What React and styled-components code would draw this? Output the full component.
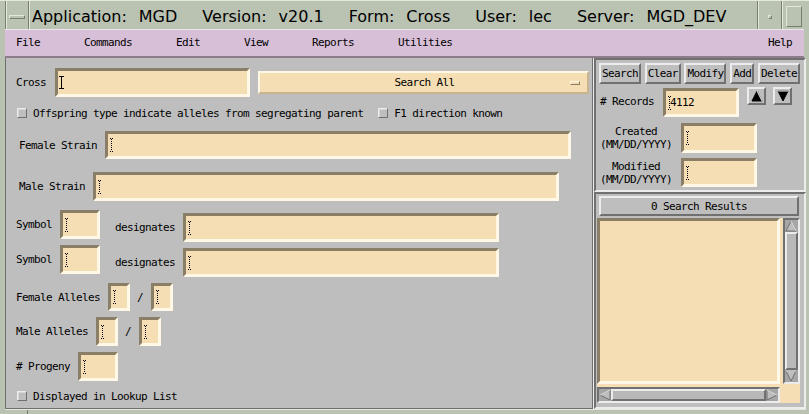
import React from "react";
import styled, { createGlobalStyle } from "styled-components";

const c = {
  frame: "#bac2b2",
  frameLight: "#e3e8dc",
  frameDark: "#767e6e",
  gray: "#bebebe",
  grayLight: "#ececec",
  grayDark: "#707070",
  trough: "#a6a6a6",
  wheat: "#f5deb3",
  wheatLight: "#fff8e6",
  wheatDark: "#8b7e66",
  thistle: "#d8bfd8",
  thistleLight: "#efe2ef",
  thistleDark: "#8c7c8c",
};

const mono = `"DejaVu Sans Mono", "Liberation Mono", monospace`;

const GlobalStyle = createGlobalStyle`
  body { margin: 0; background: ${c.frame}; }
  * { box-sizing: border-box; }
`;

const Window = styled.div`
  width: 809px;
  height: 414px;
  background: ${c.frame};
  display: flex;
  flex-direction: column;
  overflow: hidden;
  padding: 0 3px 0 5px;
  border-top: 1px solid ${c.frameLight};
  font-family: ${mono};
  font-size: 11px;
  letter-spacing: -0.62px;
  color: #000;
`;

/* window manager title bar */
const TitleBar = styled.div`
  display: flex;
  height: 28px;
  flex-shrink: 0;
`;

const WmCell = styled.div`
  width: ${(p) => (p.$w ? `${p.$w}px` : "auto")};
  flex: ${(p) => (p.$w ? "none" : 1)};
  display: flex;
  align-items: center;
  justify-content: ${(p) => (p.$w ? "center" : "flex-start")};
  padding: 3px 0 0 ${(p) => (p.$w ? 0 : 3)}px;
  border-left: 1px solid ${c.frameDark};
  box-shadow: inset 1px 0 ${c.frameLight};
`;

const WmKnob = styled.div`
  width: ${(p) => p.$w}px;
  height: ${(p) => p.$h}px;
  background: ${c.frame};
  border: 1px solid;
  border-color: ${c.frameLight} ${c.frameDark} ${c.frameDark} ${c.frameLight};
`;

const TitleText = styled.div`
  display: flex;
  gap: 25px;
  font-family: "DejaVu Sans", "Liberation Sans", sans-serif;
  font-size: 16px;
  letter-spacing: 0;
  white-space: pre;
`;

const TitlePair = styled.span`
  display: flex;
  gap: 12px;
`;

/* motif menu bar */
const MenuBar = styled.div`
  display: flex;
  align-items: center;
  gap: 44px;
  height: 29px;
  flex-shrink: 0;
  margin-right: 2px;
  padding: 0 12px 1px 11px;
  background: ${c.thistle};
  border-top: 1px solid ${c.thistleLight};
  border-bottom: 2px solid ${c.thistleDark};
`;

const MenuItem = styled.span`
  margin-left: ${(p) => (p.$end ? "auto" : "0")};
`;

const Main = styled.div`
  display: flex;
  height: 351px;
  flex-shrink: 0;
`;

const LeftPanel = styled.div`
  width: 588px;
  background: ${c.gray};
  border-left: 1px solid ${c.grayDark};
  border-right: 1px solid ${c.grayDark};
  border-bottom: 1px solid ${c.grayDark};
  padding-top: 10px;
`;

const Row = styled.div`
  display: flex;
  align-items: ${(p) => (p.$start ? "flex-start" : "center")};
  height: ${(p) => p.$h}px;
  margin-top: ${(p) => p.$top || 0}px;
  padding-left: ${(p) => p.$pl || 0}px;
`;

const Group = styled.div`
  display: flex;
  align-items: center;
  margin-top: ${(p) => p.$dy || 0}px;
  margin-left: ${(p) => p.$ml || 0}px;
`;

const Label = styled.span`
  white-space: pre;
  margin-right: ${(p) => (p.$gap === undefined ? 8 : p.$gap)}px;
  margin-left: ${(p) => p.$ml || 0}px;
  margin-top: ${(p) => p.$dy || 0}px;
`;

const Field = styled.div`
  width: ${(p) => p.$w}px;
  height: ${(p) => p.$h}px;
  flex: none;
  display: flex;
  align-items: center;
  padding-left: 1px;
  margin-top: ${(p) => p.$dy || 0}px;
  background: ${c.wheat};
  border: 3px solid;
  border-color: ${c.wheatDark} ${c.wheatLight} ${c.wheatLight} ${c.wheatDark};
`;

const Value = styled.span`
  margin-left: -2px;
`;

const OptionMenu = styled.div`
  width: 331px;
  height: 23px;
  margin-left: 8px;
  display: flex;
  align-items: center;
  background: ${c.wheat};
  border: 2px solid;
  border-color: ${c.wheatLight} #c9b48e #c9b48e ${c.wheatLight};
`;

const OptionText = styled.span`
  flex: 1;
  text-align: center;
  padding-left: 19px;
`;

const OptionMark = styled.span`
  width: 10px;
  height: 4px;
  margin-right: 7px;
  border: 1px solid;
  border-color: ${c.wheatLight} ${c.wheatDark} ${c.wheatDark} ${c.wheatLight};
`;

const Check = styled.span`
  width: 10px;
  height: 10px;
  flex: none;
  margin-right: 6px;
  margin-left: ${(p) => p.$ml || 0}px;
  background: ${c.gray};
  border: 1px solid;
  border-color: ${c.grayLight} ${c.grayDark} ${c.grayDark} ${c.grayLight};
  box-shadow: inset 1px 1px #d6d6d6;
`;

/* right side */
const RightPanel = styled.div`
  width: 213px;
  display: flex;
  flex-direction: column;
  background: ${c.gray};
  border-left: 1px solid ${c.grayLight};
`;

const Section = styled.div`
  height: ${(p) => p.$h}px;
  display: flex;
  flex-direction: column;
  padding: ${(p) => p.$pad};
  border: 2px solid;
  border-color: ${c.grayDark} ${c.grayLight} ${c.grayLight} ${c.grayDark};
`;

const ButtonRow = styled.div`
  display: flex;
  justify-content: space-between;
  width: 201px;
`;

const PushButton = styled.button`
  height: 21px;
  padding: 0 1px;
  font: inherit;
  letter-spacing: inherit;
  color: #000;
  background: ${c.gray};
  border: 2px solid;
  border-color: ${c.grayLight} ${c.grayDark} ${c.grayDark} ${c.grayLight};
`;

const ArrowButton = styled.div`
  width: 19px;
  height: 18px;
  margin-left: ${(p) => p.$ml}px;
  display: flex;
  align-items: center;
  justify-content: center;
  background: ${c.gray};
  border: 2px solid;
  border-color: ${c.grayLight} ${c.grayDark} ${c.grayDark} ${c.grayLight};
`;

const DateLabel = styled.div`
  width: 72px;
  margin-right: 9px;
  text-align: center;
  line-height: 13px;
  white-space: pre;
`;

const Results = styled.div`
  width: 200px;
  height: 20px;
  margin-left: 2px;
  display: flex;
  align-items: center;
  justify-content: center;
  border: 2px solid;
  border-color: ${c.grayLight} ${c.grayDark} ${c.grayDark} ${c.grayLight};
`;

const Scrolled = styled.div`
  margin-top: 2px;
  width: 203px;
  display: grid;
  grid-template-columns: 183px 3px 17px;
  grid-template-rows: 166px 3px 16px;
  background: ${c.wheat};
`;

const ListBox = styled.div`
  background: ${c.wheat};
  border: 3px solid;
  border-color: ${c.wheatDark} ${c.wheatLight} ${c.wheatLight} ${c.wheatDark};
`;

const ScrollBar = styled.div`
  grid-column: ${(p) => (p.$vertical ? 3 : 1)};
  grid-row: ${(p) => (p.$vertical ? 1 : 3)};
  display: flex;
  flex-direction: ${(p) => (p.$vertical ? "column" : "row")};
  background: ${c.trough};
  border: 2px solid;
  border-color: ${c.grayDark} ${c.grayLight} ${c.grayLight} ${c.grayDark};
`;

const Thumb = styled.div`
  flex: 1;
  background: #b8b8b8;
  border: 2px solid;
  border-color: ${c.grayLight} ${c.grayDark} ${c.grayDark} ${c.grayLight};
`;

const BottomFrame = styled.div`
  flex: 1;
  display: flex;
  border-top: 1px solid ${c.frameLight};
`;

const FrameTick = styled.div`
  width: ${(p) => p.$w}px;
  border-right: 1px solid ${c.frameDark};
`;

function IBeam({ dotted }) {
  if (!dotted) {
    return (
      <svg width="5" height="13" viewBox="0 0 5 13">
        <path d="M0 0.5H5M0 12.5H5M2.5 0V13" stroke="#000" strokeWidth="1" fill="none" />
      </svg>
    );
  }
  const dots = [];
  for (let y = 1; y < 13; y += 2) dots.push(<rect key={y} x="2" y={y} width="1" height="1" />);
  return (
    <svg width="5" height="14" viewBox="0 0 5 14" fill="#000">
      <rect x="1" y="0" width="1" height="1" />
      <rect x="3" y="0" width="1" height="1" />
      <rect x="1" y="13" width="1" height="1" />
      <rect x="3" y="13" width="1" height="1" />
      {dots}
    </svg>
  );
}

function Input({ w, h, dy, solid, children }) {
  return (
    <Field $w={w} $h={h} $dy={dy}>
      <IBeam dotted={!solid} />
      {children}
    </Field>
  );
}

function Triangle({ dir, dark }) {
  const pts = {
    up: "6,1 11,11 1,11",
    down: "1,1 11,1 6,11",
    left: "1,6 11,1 11,11",
    right: "1,1 11,6 1,11",
  }[dir];
  const edge = pts.split(" ").slice(0, 2).join(" ");
  return (
    <svg width="12" height="12" viewBox="0 0 12 12">
      <polygon
        points={pts}
        fill={dark ? "#000" : c.gray}
        stroke={dark ? "#000" : c.grayDark}
        strokeWidth="1"
      />
      <polyline points={edge} stroke={dark ? "#eeeeee" : c.grayLight} fill="none" />
    </svg>
  );
}

const menus = ["File", "Commands", "Edit", "View", "Reports", "Utilities"];
const titleParts = [
  ["Application:", "MGD"],
  ["Version:", "v20.1"],
  ["Form:", "Cross"],
  ["User:", "lec"],
  ["Server:", "MGD_DEV"],
];

export default function App() {
  return (
    <>
      <GlobalStyle />
      <Window>
        <TitleBar>
          <WmCell $w={23}>
            <WmKnob $w={16} $h={4} />
          </WmCell>
          <WmCell>
            <TitleText>
              {titleParts.map(([k, v]) => (
                <TitlePair key={k}>
                  <span>{k}</span>
                  <span>{v}</span>
                </TitlePair>
              ))}
            </TitleText>
          </WmCell>
          <WmCell $w={24}>
            <WmKnob $w={4} $h={4} />
          </WmCell>
          <WmCell $w={25}>
            <WmKnob $w={16} $h={21} />
          </WmCell>
        </TitleBar>

        <MenuBar>
          {menus.map((m) => (
            <MenuItem key={m}>{m}</MenuItem>
          ))}
          <MenuItem $end>Help</MenuItem>
        </MenuBar>

        <Main>
          <LeftPanel>
            <Row $h={29} $pl={10}>
              <Label $gap={9}>Cross</Label>
              <Input w={195} h={29} solid />
              <OptionMenu>
                <OptionText>Search All</OptionText>
                <OptionMark />
              </OptionMenu>
            </Row>
            <Row $h={16} $top={8} $pl={11}>
              <Check />
              <Label $gap={0}>Offspring type indicate alleles from segregating parent</Label>
              <Check $ml={15} />
              <Label $gap={0}>F1 direction known</Label>
            </Row>
            <Row $h={28} $top={10} $pl={13}>
              <Label>Female Strain</Label>
              <Input w={466} h={28} />
            </Row>
            <Row $h={29} $top={13} $pl={13}>
              <Label>Male Strain</Label>
              <Input w={466} h={29} />
            </Row>
            {[9, 3].map((top, i) => (
              <Row key={i} $h={32} $top={top} $pl={10} $start>
                <Group>
                  <Label>Symbol</Label>
                  <Input w={40} h={29} />
                </Group>
                <Group $ml={15} $dy={3}>
                  <Label>designates</Label>
                  <Input w={316} h={29} />
                </Group>
              </Row>
            ))}
            <Row $h={28} $top={6} $pl={10}>
              <Label>Female Alleles</Label>
              <Input w={22} h={28} />
              <Label $ml={7}>/</Label>
              <Input w={22} h={28} />
            </Row>
            <Row $h={29} $top={6} $pl={10}>
              <Label>Male Alleles</Label>
              <Input w={22} h={29} />
              <Label $ml={7}>/</Label>
              <Input w={22} h={29} />
            </Row>
            <Row $h={29} $top={6} $pl={10}>
              <Label>{"# Progeny"}</Label>
              <Input w={40} h={29} />
            </Row>
            <Row $h={16} $top={7} $pl={11}>
              <Check />
              <Label $gap={0}>Displayed in Lookup List</Label>
            </Row>
          </LeftPanel>

          <RightPanel>
            <Section $h={134} $pad="3px 0 0 3px">
              <ButtonRow>
                {["Search", "Clear", "Modify", "Add", "Delete"].map((b) => (
                  <PushButton key={b}>{b}</PushButton>
                ))}
              </ButtonRow>
              <Row $h={30} $top={3} $pl={1} $start>
                <Label $gap={9} $dy={8}>
                  {"# Records"}
                </Label>
                <Input w={76} h={29} dy={1}>
                  <Value>4112</Value>
                </Input>
                <ArrowButton $ml={8}>
                  <Triangle dir="up" dark />
                </ArrowButton>
                <ArrowButton $ml={7}>
                  <Triangle dir="down" dark />
                </ArrowButton>
              </Row>
              <Row $h={30} $top={6} $pl={1}>
                <DateLabel>{"Created\n(MM/DD/YYYY)"}</DateLabel>
                <Input w={76} h={30} />
              </Row>
              <Row $h={29} $top={5} $pl={1}>
                <DateLabel>{"Modified\n(MM/DD/YYYY)"}</DateLabel>
                <Input w={76} h={29} />
              </Row>
            </Section>
            <Section $h={217} $pad="2px 0 0 1px">
              <Results>0 Search Results</Results>
              <Scrolled>
                <ListBox />
                <ScrollBar $vertical>
                  <Triangle dir="up" />
                  <Thumb />
                  <Triangle dir="down" />
                </ScrollBar>
                <ScrollBar>
                  <Triangle dir="left" />
                  <Thumb />
                  <Triangle dir="right" />
                </ScrollBar>
              </Scrolled>
            </Section>
          </RightPanel>
        </Main>

        <BottomFrame>
          <FrameTick $w={23} />
        </BottomFrame>
      </Window>
    </>
  );
}
